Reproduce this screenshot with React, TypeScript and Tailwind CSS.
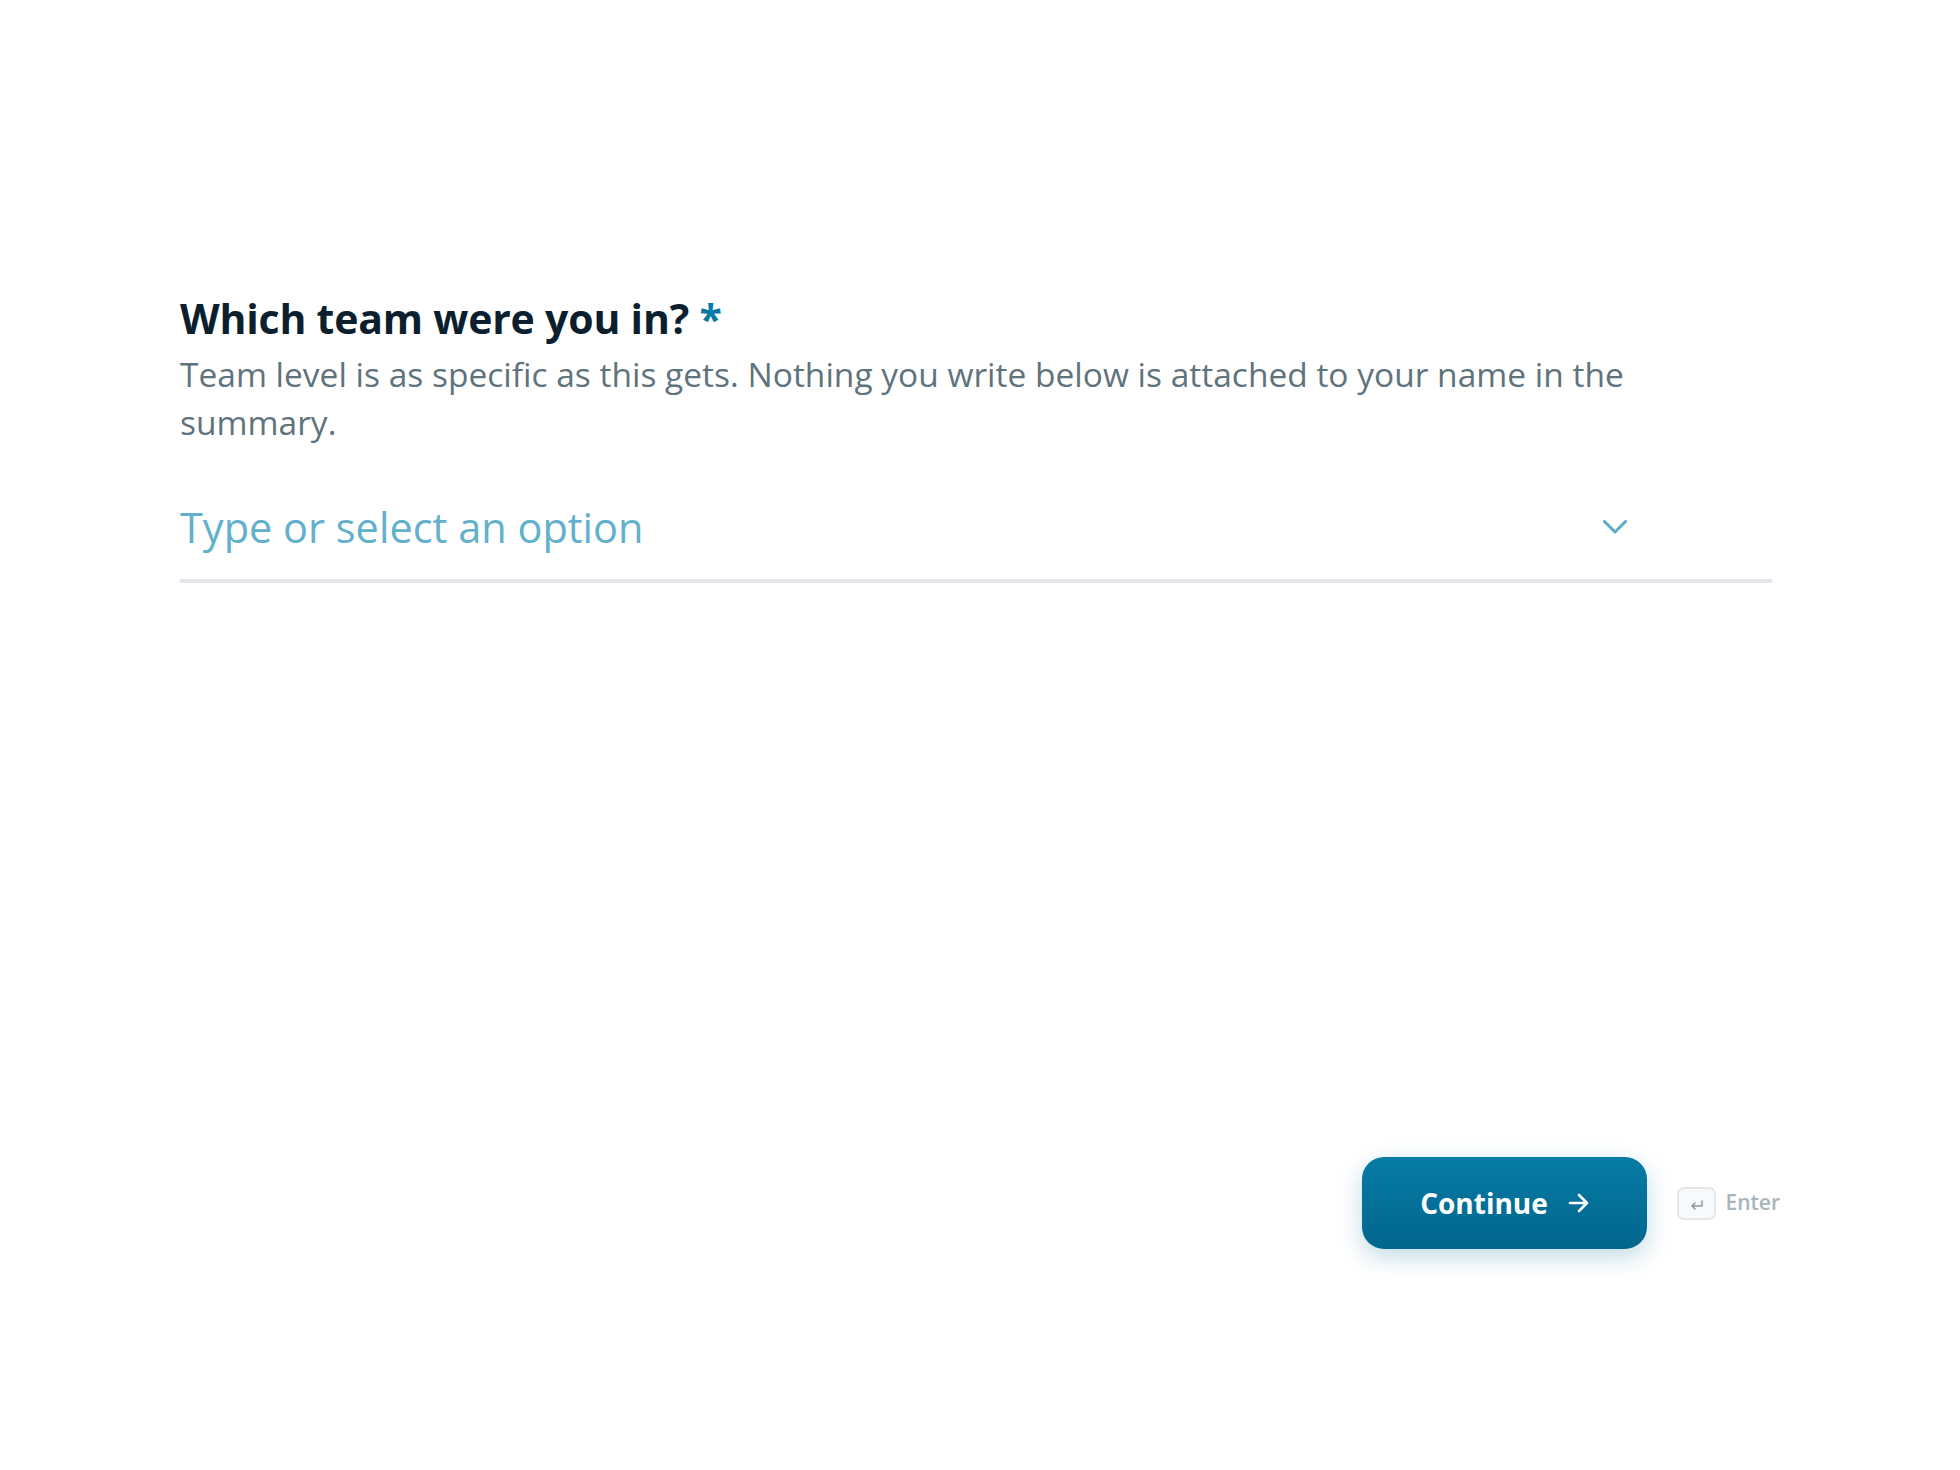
import React from 'react';

// Single question step of a survey form
export default function App() {
  return (
    <div className="min-h-[1470px] w-full bg-white font-['Open_Sans',sans-serif]">
      <div className="flex flex-col pl-[180px] pr-[180px] pt-[290px]">
        <h1 className="text-[41px] font-bold leading-[56px] tracking-[-0.2px] text-[#0c1f2f]">
          Which team were you in? <span className="text-[#0679a5]">*</span>
        </h1>
        <p className="mt-[4px] max-w-[1500px] text-[33.5px] leading-[48px] text-[#5f737d]">
          Team level is as specific as this gets. Nothing you write below is attached to your name in the summary.
        </p>

        <div className="mt-[56px] mr-[8px] flex items-center justify-between border-b-[4px] border-[#e3e4ea] pb-[27px] pr-[145px]">
          <span className="text-[41.5px] leading-[50px] text-[#62b0cc]">Type or select an option</span>
          <svg width="24" height="14" viewBox="0 0 24 14" fill="none">
            <path d="M1.5 1.5 L12 12 L22.5 1.5" stroke="#5aaccb" strokeWidth="3" strokeLinecap="round" strokeLinejoin="round" />
          </svg>
        </div>

        <div className="mt-[574px] flex items-center justify-end gap-[30px]">
          <button className="flex h-[92px] w-[285px] items-center justify-center gap-[20px] rounded-[22px] bg-gradient-to-b from-[#067ba6] to-[#02668d] text-white shadow-[0_8px_24px_rgba(4,110,150,0.25)]">
            <span className="text-[28px] font-bold">Continue</span>
            <svg width="22" height="20" viewBox="0 0 22 20" fill="none">
              <path d="M2 10 H19 M11 2 L19 10 L11 18" stroke="white" strokeWidth="2.6" strokeLinecap="round" strokeLinejoin="round" />
            </svg>
          </button>
          <div className="flex items-center gap-[9px]">
            <div className="flex h-[33px] w-[39px] items-center justify-center rounded-[7px] border-2 border-[#e4e7ea] bg-[#f8f9fa]">
              <svg width="14" height="10" viewBox="0 0 14 10" fill="none" className="mt-[4px]">
                <path d="M12 1 V6 H2 M5 3 L2 6 L5 9" stroke="#8b979e" strokeWidth="1.5" strokeLinecap="round" strokeLinejoin="round" />
              </svg>
            </div>
            <span className="text-[21px] font-semibold text-[#a9b5bb]">Enter</span>
          </div>
        </div>
      </div>
    </div>
  );
}
